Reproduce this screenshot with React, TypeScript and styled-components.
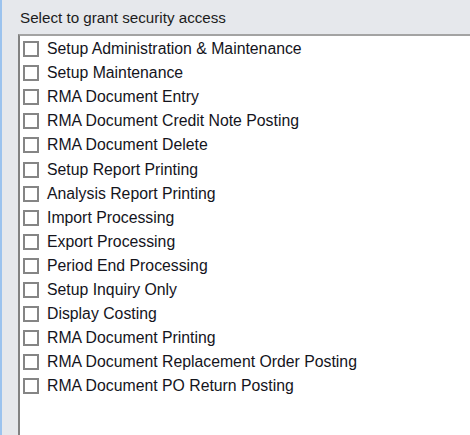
import React from 'react';
import styled, { createGlobalStyle } from 'styled-components';

const GlobalStyle = createGlobalStyle`
    html, body {
        margin: 0;
        padding: 0;
        background: #e6e8ec;
    }
    body {
        font-family: "Liberation Sans", Arial, sans-serif;
    }
`

const Panel = styled.section`
    width: 470px;
    height: 435px;
    box-sizing: border-box;
    border-left: 2px solid #9cc3ee;
    background: #e6e8ec;
    padding: 9px 0 0 16px;
    display: flex;
    flex-direction: column;
    overflow: hidden;
`

const Title = styled.div`
    font-size: 15.2px;
    line-height: 18px;
    color: #1c1c1c;
    padding-left: 2px;
    height: 25px;
`

const ListBox = styled.ul`
    flex: 1;
    margin: 0;
    padding: 1px 0 0 3px;
    list-style: none;
    background: #fff;
    border-top: 2px solid #a3a3a3;
    border-left: 2px solid #828282;
`

const Row = styled.li`
    height: 24.1px;
    display: flex;
    align-items: center;
    gap: 8px;
    font-size: 15.8px;
    color: #14141c;
`

const Box = styled.span`
    width: 16px;
    height: 16px;
    box-sizing: border-box;
    border: 2px solid #858585;
    background: #fff;
    flex-shrink: 0;
`

const items = [
    'Setup Administration & Maintenance',
    'Setup Maintenance',
    'RMA Document Entry',
    'RMA Document Credit Note Posting',
    'RMA Document Delete',
    'Setup Report Printing',
    'Analysis Report Printing',
    'Import Processing',
    'Export Processing',
    'Period End Processing',
    'Setup Inquiry Only',
    'Display Costing',
    'RMA Document Printing',
    'RMA Document Replacement Order Posting',
    'RMA Document PO Return Posting',
];

const App = () => {
    return (
        <>
            <GlobalStyle />
            <Panel>
                <Title>Select to grant security access</Title>
                <ListBox>
                    {items.map((item) => (
                        <Row key={item}>
                            <Box />
                            <span>{item}</span>
                        </Row>
                    ))}
                </ListBox>
            </Panel>
        </>
    )
}

export default App;
